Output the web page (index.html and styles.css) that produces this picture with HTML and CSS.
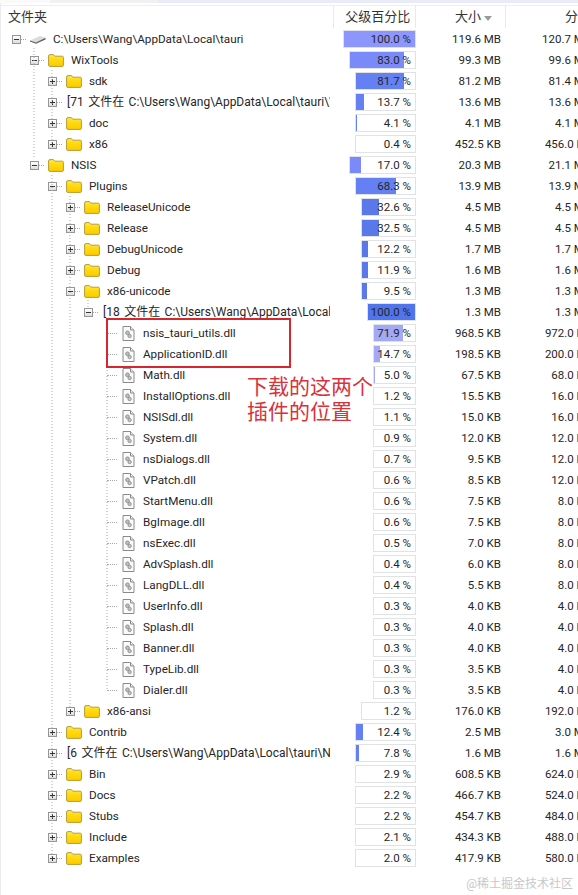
FILE: index.html
```html
<!DOCTYPE html>
<html lang="zh">
<head>
<meta charset="utf-8">
<title>WinDirStat</title>
<link rel="stylesheet" href="styles.css">
</head>
<body>
<svg class="defs" width="0" height="0" aria-hidden="true">
  <defs>
    <linearGradient id="fy" x1="0" y1="0" x2="0" y2="1">
      <stop offset="0" stop-color="#ffe95c"/>
      <stop offset=".35" stop-color="#ffdc10"/>
      <stop offset="1" stop-color="#fdca00"/>
    </linearGradient>
  </defs>
  <symbol id="folder" viewBox="0 0 16 13">
    <path d="M.6 2 Q.6 .6 2 .6 H5.4 L6.8 2.2 H14.2 Q15.4 2.2 15.4 3.4 V11.2 Q15.4 12.4 14.2 12.4 H1.8 Q.6 12.4 .6 11.2 Z" fill="url(#fy)" stroke="#b59c3a" stroke-width="1"/>
  </symbol>
  <symbol id="dll" viewBox="0 0 13 15">
    <path d="M1 .5 H8.5 L12 4 V14.5 H1 Z" fill="#fbfbfb" stroke="#8a8a8a" stroke-width="1"/>
    <path d="M8.5 .5 V4 H12" fill="#ececec" stroke="#8a8a8a" stroke-width="1"/>
    <circle cx="5.5" cy="6.8" r="1.9" fill="#bdbdbd" stroke="#858585" stroke-width=".8"/>
    <circle cx="7.6" cy="10" r="1.7" fill="#c8c8c8" stroke="#858585" stroke-width=".8"/>
  </symbol>
  <symbol id="drive" viewBox="0 0 16 9">
    <path d="M0 5.5 L10 1 L15.5 2.8 L6 7.6 Z" fill="#dcdcdc"/>
    <path d="M0 5.5 L6 7.6 L15.5 2.8 V4.6 L6 8.8 L0 6.6 Z" fill="#5e5e5e"/>
  </symbol>
</svg>

<div class="topstrip"><span class="strip-a"></span><span class="strip-b"></span><span class="strip-c"></span></div>

<header class="head">
  <div class="h-tree">文件夹</div>
  <div class="h-pct">父级百分比</div>
  <div class="h-size">大小<i class="sort"></i></div>
  <div class="h-alloc">分</div>
</header>

<main class="rows">
  <div class="row"><div class="tree d0"><i class="box minus"></i><svg class="ic-drive"><use href="#drive"/></svg><span>C:\Users\Wang\AppData\Local\tauri</span></div><div class="pct p0"><b class="f0" style="width:100%"></b><em>100.0 %</em></div><div class="size">119.6 MB</div><div class="alloc">120.7 MB</div></div>
  <div class="row"><div class="tree d1"><i class="box minus"></i><svg class="ic-folder"><use href="#folder"/></svg><span>WixTools</span></div><div class="pct p1"><b class="f1" style="width:83%"></b><em>83.0 %</em></div><div class="size">99.3 MB</div><div class="alloc">99.6 MB</div></div>
  <div class="row"><div class="tree d2"><i class="box plus"></i><svg class="ic-folder"><use href="#folder"/></svg><span>sdk</span></div><div class="pct p2"><b class="f2" style="width:81.7%"></b><em>81.7 %</em></div><div class="size">81.2 MB</div><div class="alloc">81.4 MB</div></div>
  <div class="row"><div class="tree d2"><i class="box plus"></i><span class="files">[71 文件在 C:\Users\Wang\AppData\Local\tauri\WixTools]</span></div><div class="pct p2"><b class="f2" style="width:13.7%"></b><em>13.7 %</em></div><div class="size">13.6 MB</div><div class="alloc">13.6 MB</div></div>
  <div class="row"><div class="tree d2"><i class="box plus"></i><svg class="ic-folder"><use href="#folder"/></svg><span>doc</span></div><div class="pct p2"><b class="f2" style="width:1px"></b><em>4.1 %</em></div><div class="size">4.1 MB</div><div class="alloc">4.1 MB</div></div>
  <div class="row"><div class="tree d2"><i class="box plus"></i><svg class="ic-folder"><use href="#folder"/></svg><span>x86</span></div><div class="pct p2"><em>0.4 %</em></div><div class="size">452.5 KB</div><div class="alloc">456.0 KB</div></div>
  <div class="row"><div class="tree d1"><i class="box minus"></i><svg class="ic-folder"><use href="#folder"/></svg><span>NSIS</span></div><div class="pct p1"><b class="f1" style="width:17%"></b><em>17.0 %</em></div><div class="size">20.3 MB</div><div class="alloc">21.1 MB</div></div>
  <div class="row"><div class="tree d2"><i class="box minus"></i><svg class="ic-folder"><use href="#folder"/></svg><span>Plugins</span></div><div class="pct p2"><b class="f2" style="width:68.3%"></b><em>68.3 %</em></div><div class="size">13.9 MB</div><div class="alloc">13.9 MB</div></div>
  <div class="row"><div class="tree d3"><i class="box plus"></i><svg class="ic-folder"><use href="#folder"/></svg><span>ReleaseUnicode</span></div><div class="pct p3"><b class="f3" style="width:32.6%"></b><em>32.6 %</em></div><div class="size">4.5 MB</div><div class="alloc">4.5 MB</div></div>
  <div class="row"><div class="tree d3"><i class="box plus"></i><svg class="ic-folder"><use href="#folder"/></svg><span>Release</span></div><div class="pct p3"><b class="f3" style="width:32.5%"></b><em>32.5 %</em></div><div class="size">4.5 MB</div><div class="alloc">4.5 MB</div></div>
  <div class="row"><div class="tree d3"><i class="box plus"></i><svg class="ic-folder"><use href="#folder"/></svg><span>DebugUnicode</span></div><div class="pct p3"><b class="f3" style="width:12.2%"></b><em>12.2 %</em></div><div class="size">1.7 MB</div><div class="alloc">1.7 MB</div></div>
  <div class="row"><div class="tree d3"><i class="box plus"></i><svg class="ic-folder"><use href="#folder"/></svg><span>Debug</span></div><div class="pct p3"><b class="f3" style="width:11.9%"></b><em>11.9 %</em></div><div class="size">1.6 MB</div><div class="alloc">1.6 MB</div></div>
  <div class="row"><div class="tree d3"><i class="box minus"></i><svg class="ic-folder"><use href="#folder"/></svg><span>x86-unicode</span></div><div class="pct p3"><b class="f3" style="width:9.5%"></b><em>9.5 %</em></div><div class="size">1.3 MB</div><div class="alloc">1.3 MB</div></div>
  <div class="row"><div class="tree d4"><i class="box minus"></i><span class="files">[18 文件在 C:\Users\Wang\AppData\Local\tauri\NSIS]</span></div><div class="pct p4"><b class="f4" style="width:100%"></b><em>100.0 %</em></div><div class="size">1.3 MB</div><div class="alloc">1.3 MB</div></div>
  <div class="row"><div class="tree d5"><i class="leaf"></i><svg class="ic-dll"><use href="#dll"/></svg><span>nsis_tauri_utils.dll</span></div><div class="pct p5"><b class="f5" style="width:71.9%"></b><em>71.9 %</em></div><div class="size">968.5 KB</div><div class="alloc">972.0 KB</div></div>
  <div class="row"><div class="tree d5"><i class="leaf"></i><svg class="ic-dll"><use href="#dll"/></svg><span>ApplicationID.dll</span></div><div class="pct p5"><b class="f5" style="width:14.7%"></b><em>14.7 %</em></div><div class="size">198.5 KB</div><div class="alloc">200.0 KB</div></div>
  <div class="row"><div class="tree d5"><i class="leaf"></i><svg class="ic-dll"><use href="#dll"/></svg><span>Math.dll</span></div><div class="pct p5"><b class="f5" style="width:1px"></b><em>5.0 %</em></div><div class="size">67.5 KB</div><div class="alloc">68.0 KB</div></div>
  <div class="row"><div class="tree d5"><i class="leaf"></i><svg class="ic-dll"><use href="#dll"/></svg><span>InstallOptions.dll</span></div><div class="pct p5"><em>1.2 %</em></div><div class="size">15.5 KB</div><div class="alloc">16.0 KB</div></div>
  <div class="row"><div class="tree d5"><i class="leaf"></i><svg class="ic-dll"><use href="#dll"/></svg><span>NSISdl.dll</span></div><div class="pct p5"><em>1.1 %</em></div><div class="size">15.0 KB</div><div class="alloc">16.0 KB</div></div>
  <div class="row"><div class="tree d5"><i class="leaf"></i><svg class="ic-dll"><use href="#dll"/></svg><span>System.dll</span></div><div class="pct p5"><em>0.9 %</em></div><div class="size">12.0 KB</div><div class="alloc">12.0 KB</div></div>
  <div class="row"><div class="tree d5"><i class="leaf"></i><svg class="ic-dll"><use href="#dll"/></svg><span>nsDialogs.dll</span></div><div class="pct p5"><em>0.7 %</em></div><div class="size">9.5 KB</div><div class="alloc">12.0 KB</div></div>
  <div class="row"><div class="tree d5"><i class="leaf"></i><svg class="ic-dll"><use href="#dll"/></svg><span>VPatch.dll</span></div><div class="pct p5"><em>0.6 %</em></div><div class="size">8.5 KB</div><div class="alloc">12.0 KB</div></div>
  <div class="row"><div class="tree d5"><i class="leaf"></i><svg class="ic-dll"><use href="#dll"/></svg><span>StartMenu.dll</span></div><div class="pct p5"><em>0.6 %</em></div><div class="size">7.5 KB</div><div class="alloc">8.0 KB</div></div>
  <div class="row"><div class="tree d5"><i class="leaf"></i><svg class="ic-dll"><use href="#dll"/></svg><span>BgImage.dll</span></div><div class="pct p5"><em>0.6 %</em></div><div class="size">7.5 KB</div><div class="alloc">8.0 KB</div></div>
  <div class="row"><div class="tree d5"><i class="leaf"></i><svg class="ic-dll"><use href="#dll"/></svg><span>nsExec.dll</span></div><div class="pct p5"><em>0.5 %</em></div><div class="size">7.0 KB</div><div class="alloc">8.0 KB</div></div>
  <div class="row"><div class="tree d5"><i class="leaf"></i><svg class="ic-dll"><use href="#dll"/></svg><span>AdvSplash.dll</span></div><div class="pct p5"><em>0.4 %</em></div><div class="size">6.0 KB</div><div class="alloc">8.0 KB</div></div>
  <div class="row"><div class="tree d5"><i class="leaf"></i><svg class="ic-dll"><use href="#dll"/></svg><span>LangDLL.dll</span></div><div class="pct p5"><em>0.4 %</em></div><div class="size">5.5 KB</div><div class="alloc">8.0 KB</div></div>
  <div class="row"><div class="tree d5"><i class="leaf"></i><svg class="ic-dll"><use href="#dll"/></svg><span>UserInfo.dll</span></div><div class="pct p5"><em>0.3 %</em></div><div class="size">4.0 KB</div><div class="alloc">4.0 KB</div></div>
  <div class="row"><div class="tree d5"><i class="leaf"></i><svg class="ic-dll"><use href="#dll"/></svg><span>Splash.dll</span></div><div class="pct p5"><em>0.3 %</em></div><div class="size">4.0 KB</div><div class="alloc">4.0 KB</div></div>
  <div class="row"><div class="tree d5"><i class="leaf"></i><svg class="ic-dll"><use href="#dll"/></svg><span>Banner.dll</span></div><div class="pct p5"><em>0.3 %</em></div><div class="size">4.0 KB</div><div class="alloc">4.0 KB</div></div>
  <div class="row"><div class="tree d5"><i class="leaf"></i><svg class="ic-dll"><use href="#dll"/></svg><span>TypeLib.dll</span></div><div class="pct p5"><em>0.3 %</em></div><div class="size">3.5 KB</div><div class="alloc">4.0 KB</div></div>
  <div class="row"><div class="tree d5"><i class="leaf"></i><svg class="ic-dll"><use href="#dll"/></svg><span>Dialer.dll</span></div><div class="pct p5"><em>0.3 %</em></div><div class="size">3.5 KB</div><div class="alloc">4.0 KB</div></div>
  <div class="row"><div class="tree d3"><i class="box plus"></i><svg class="ic-folder"><use href="#folder"/></svg><span>x86-ansi</span></div><div class="pct p3"><em>1.2 %</em></div><div class="size">176.0 KB</div><div class="alloc">192.0 KB</div></div>
  <div class="row"><div class="tree d2"><i class="box plus"></i><svg class="ic-folder"><use href="#folder"/></svg><span>Contrib</span></div><div class="pct p2"><b class="f2" style="width:12.4%"></b><em>12.4 %</em></div><div class="size">2.5 MB</div><div class="alloc">3.0 MB</div></div>
  <div class="row"><div class="tree d2"><i class="box plus"></i><span class="files">[6 文件在 C:\Users\Wang\AppData\Local\tauri\NSIS]</span></div><div class="pct p2"><b class="f2" style="width:5%"></b><em>7.8 %</em></div><div class="size">1.6 MB</div><div class="alloc">1.6 MB</div></div>
  <div class="row"><div class="tree d2"><i class="box plus"></i><svg class="ic-folder"><use href="#folder"/></svg><span>Bin</span></div><div class="pct p2"><em>2.9 %</em></div><div class="size">608.5 KB</div><div class="alloc">624.0 KB</div></div>
  <div class="row"><div class="tree d2"><i class="box plus"></i><svg class="ic-folder"><use href="#folder"/></svg><span>Docs</span></div><div class="pct p2"><em>2.2 %</em></div><div class="size">466.7 KB</div><div class="alloc">524.0 KB</div></div>
  <div class="row"><div class="tree d2"><i class="box plus"></i><svg class="ic-folder"><use href="#folder"/></svg><span>Stubs</span></div><div class="pct p2"><em>2.2 %</em></div><div class="size">454.7 KB</div><div class="alloc">484.0 KB</div></div>
  <div class="row"><div class="tree d2"><i class="box plus"></i><svg class="ic-folder"><use href="#folder"/></svg><span>Include</span></div><div class="pct p2"><em>2.1 %</em></div><div class="size">434.3 KB</div><div class="alloc">488.0 KB</div></div>
  <div class="row"><div class="tree d2"><i class="box plus"></i><svg class="ic-folder"><use href="#folder"/></svg><span>Examples</span></div><div class="pct p2"><em>2.0 %</em></div><div class="size">417.9 KB</div><div class="alloc">580.0 KB</div></div>
</main>

<svg class="guides" width="330" height="895" aria-hidden="true">
  <path d="M34 48V159 M52 70V143 M52 175V857 M70 196V710 M88 300V307 M107 322V689"/>
</svg>
<div class="callout"></div>
<div class="note">下载的这两个<br>插件的位置</div>
<div class="mark">@稀土掘金技术社区</div>
</body>
</html>
```

FILE: styles.css
```css
* { box-sizing: border-box; }
html, body { margin: 0; height: 100%; }
body {
  position: relative;
  width: 578px;
  height: 895px;
  overflow: hidden;
  background: #fff;
  box-shadow: inset 1px 0 #ececec;
  color: #262626;
  font: 11.5px/21px Roboto, "Noto Sans CJK SC", sans-serif;
}
.defs { position: absolute; }

.topstrip { display: flex; height: 6px; border-bottom: 1px solid #eeeeee; align-items: flex-start; }
.topstrip span { height: 3px; }
.strip-a { width: 50px; background: #fafafa; }
.strip-b { width: 108px; background: #f1f1f3; }
.strip-c { flex: 1; background: #e9ebf8; }

.head {
  display: flex;
  height: 22px;
  font-size: 13px;
  line-height: 22px;
  color: #333;
}
.h-tree { width: 335px; padding-left: 8px; border-right: 1px solid #e9e9e9; }
.h-pct { width: 82px; padding-left: 11px; border-right: 1px solid #e9e9e9; }
.h-size { width: 90px; padding-left: 39px; border-right: 1px solid #e9e9e9; display: flex; align-items: center; }
.h-alloc { flex: 1; padding-left: 59px; }
.sort {
  width: 0; height: 0; margin-left: 3px; margin-top: 2px;
  border-left: 4.5px solid transparent;
  border-right: 4.5px solid transparent;
  border-top: 5px solid #9a9a9a;
}

.rows { display: flex; flex-direction: column; }
.row { display: flex; height: 21px; flex: none; }

.tree {
  width: 330px;
  padding-top: 2px;
  display: flex;
  align-items: center;
  overflow: hidden;
  white-space: nowrap;
  flex: none;
  font-size: 11.7px;
}
.d0 { padding-left: 12px; }
.d1 { padding-left: 30px; }
.d2 { padding-left: 48px; }
.d3 { padding-left: 66px; }
.d4 { padding-left: 84px; }
.d5 { padding-left: 107px; }

.box {
  position: relative;
  flex: none;
  width: 9px; height: 9px;
  border: 1px solid #959595;
}
.minus {
  background:
    linear-gradient(#333, #333) center / 5px 1px no-repeat,
    linear-gradient(#fff, #dedede);
}
.plus {
  background:
    linear-gradient(#333, #333) center / 5px 1px no-repeat,
    linear-gradient(#333, #333) center / 1px 5px no-repeat,
    linear-gradient(#fff, #dedede);
}
.box::after {
  content: "";
  position: absolute;
  left: 8px; top: 3px;
  width: 5px;
  border-top: 1px dotted #a9a9a9;
}

.box + svg, .box + span { margin-left: 9px; }
.box + .files { margin-left: 10px; word-spacing: 1.5px; font-size: 12px; }
.ic-folder { width: 16px; height: 13px; flex: none; margin-right: 7px; }
.ic-drive { width: 16px; height: 9px; flex: none; margin-right: 7px; }
.ic-dll { width: 13px; height: 15px; flex: none; margin-right: 8px; margin-left: 5px; }
.leaf { width: 10px; flex: none; border-top: 1px dotted #a9a9a9; }

.pct {
  position: relative;
  flex: none;
  height: 18px;
  margin-top: 2px;
  border: 1px solid #dfe3e8;
  background: #fff;
}
.pct b { position: absolute; left: 0; top: 0; bottom: 0; display: block; }
.pct em {
  position: absolute; right: 4px; top: 0;
  font-style: normal;
  line-height: 16px;
  white-space: nowrap;
}
.p0 { margin-left: 13px; width: 73px; }
.p1 { margin-left: 19px; width: 67px; }
.p2 { margin-left: 25px; width: 61px; }
.p3 { margin-left: 31px; width: 55px; }
.p4 { margin-left: 37px; width: 49px; }
.p5 { margin-left: 43px; width: 43px; }
.f0 { background: #8c96fd; }
.f1 { background: #7a8af8; }
.f2 { background: #6480f2; }
.f3 { background: #5a78ea; }
.f4 { background: #4f74ec; }
.f5 { background: #a3a9f4; }

.size, .alloc { flex: none; text-align: right; white-space: nowrap; line-height: 23px; }
.size { width: 85px; }
.alloc { width: 90px; }

.guides { position: absolute; left: 0; top: 0; pointer-events: none; }
.guides path { stroke: #a9a9a9; stroke-width: 1; stroke-dasharray: 1 2; fill: none; }

.callout {
  position: absolute;
  left: 106px; top: 318px;
  width: 185px; height: 50px;
  border: 2px solid #d7262e;
}
.note {
  position: absolute;
  left: 247px; top: 375px;
  color: #d9323a;
  font-size: 21px;
  line-height: 25px;
  white-space: nowrap;
}
.mark {
  position: absolute;
  right: 5px; bottom: 2px;
  color: #c8c8c8;
  font-size: 12px;
  line-height: 18px;
  white-space: nowrap;
}
```
